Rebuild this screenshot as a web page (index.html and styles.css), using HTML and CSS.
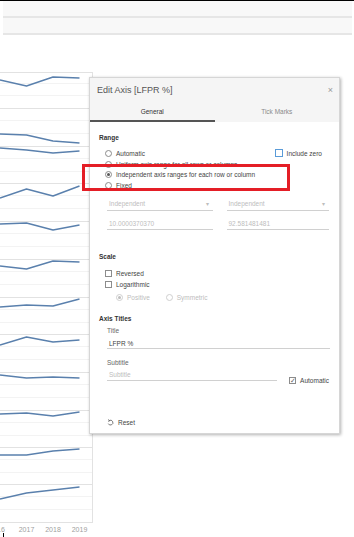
FILE: index.html
```html
<!DOCTYPE html>
<html lang="en">
<head>
    <meta charset="UTF-8">
    <meta name="viewport" content="width=device-width, initial-scale=1.0">
    <title>Edit Axis [LFPR %]</title>
    <link rel="stylesheet" href="styles.css">
</head>
<body>

    <!-- Toolbar strips across the top -->
    <div class="toolbar">
        <div class="band"></div>
        <div class="band"></div>
    </div>

    <!-- Small multiples of LFPR lines, one per row -->
    <svg class="chart" width="95" height="502" viewBox="0 35 95 502">
        <path class="grid-faint" d="M0 83.5H92M0 95.5H92M0 120.5H92M0 133.5H92M0 158.5H92M0 171.5H92M0 195.5H92M0 208.5H92M0 233.5H92M0 246.5H92M0 271.5H92M0 284.5H92M0 309.5H92M0 322.5H92M0 346.5H92M0 359.5H92M0 384.5H92M0 397.5H92M0 422.5H92M0 435.5H92M0 459.5H92M0 472.5H92M0 496.5H92M0 509.5H92"/>
        <path class="grid" d="M0 72.5H92M0 108.5H92M0 146.5H92M0 183.5H92M0 221.5H92M0 259.5H92M0 297.5H92M0 334.5H92M0 372.5H92M0 410.5H92M0 447.5H92M0 484.5H92M0 522.5H92M92.5 72V523"/>
        <g class="series">
            <polyline points="0,80 26.5,86 53,77 79.5,78"/>
            <polyline points="0,134 26.5,135 53,141 79.5,143"/>
            <polyline points="0,148 26.5,150 53,153 79.5,151"/>
            <polyline points="0,198 26.5,189 53,196 79.5,186"/>
            <polyline points="0,224 26.5,223 53,230 79.5,225"/>
            <polyline points="0,266 26.5,269 53,261 79.5,262"/>
            <polyline points="0,307 26.5,305 53,306 79.5,299"/>
            <polyline points="0,345 26.5,337 53,342 79.5,340"/>
            <polyline points="0,375 26.5,378 53,377 79.5,378"/>
            <polyline points="0,414 26.5,413 53,416 79.5,412"/>
            <polyline points="0,455 26.5,455 53,451 79.5,449"/>
            <polyline points="0,499 26.5,493 53,490 79.5,487"/>
        </g>
        <g class="axis-label">
            <text x="-3" y="531.5">2016</text>
            <text x="26.5" y="531.5">2017</text>
            <text x="53" y="531.5">2018</text>
            <text x="79.5" y="531.5">2019</text>
        </g>
        <path class="tick" d="M3.5 533V537"/>
    </svg>

    <!-- Edit Axis dialog -->
    <div class="dialog">
        <div class="dialog-head">
            <div class="dialog-title">
                <span>Edit Axis [LFPR %]</span>
                <span class="close">×</span>
            </div>
            <div class="tabs">
                <div class="tab active">General</div>
                <div class="tab">Tick Marks</div>
            </div>
        </div>

        <div class="dialog-body">
            <div class="section-title">Range</div>
            <div class="options">
                <div class="option">
                    <span class="radio"></span>Automatic
                    <span class="aside"><span class="checkbox focus"></span>Include zero</span>
                </div>
                <div class="option"><span class="radio"></span>Uniform axis range for all rows or columns</div>
                <div class="option"><span class="radio checked"></span>Independent axis ranges for each row or column</div>
                <div class="option"><span class="radio"></span>Fixed</div>
            </div>

            <div class="field-pair selects">
                <div class="field disabled">Independent<span class="caret">▾</span></div>
                <div class="field disabled narrow">Independent<span class="caret">▾</span></div>
            </div>
            <div class="field-pair values">
                <div class="field disabled">10.0000370370</div>
                <div class="field disabled narrow">92.581481481</div>
            </div>

            <div class="section-title scale">Scale</div>
            <div class="option boxed"><span class="checkbox"></span>Reversed</div>
            <div class="option boxed"><span class="checkbox"></span>Logarithmic</div>
            <div class="option sub disabled">
                <span class="radio checked"></span>Positive
                <span class="radio spaced"></span>Symmetric
            </div>

            <div class="section-title titles">Axis Titles</div>
            <div class="field-label">Title</div>
            <div class="field wide">LFPR %</div>
            <div class="field-label disabled">Subtitle</div>
            <div class="subtitle-row">
                <div class="field disabled subtitle">Subtitle</div>
                <span class="auto"><span class="checkbox ticked">✓</span>Automatic</span>
            </div>

            <div class="reset">
                <svg width="7" height="7" viewBox="0 0 7 7">
                    <path d="M2.2 1.6A2.4 2.4 0 1 1 1.3 4.6" fill="none" stroke="#555" stroke-width="0.8"/>
                    <path d="M1 0.7L2.6 1.5L1.5 2.9" fill="none" stroke="#555" stroke-width="0.8"/>
                </svg>
                Reset
            </div>
        </div>
    </div>

    <!-- Annotation box -->
    <div class="highlight"></div>

</body>
</html>
```

FILE: styles.css
```css
/* Page */
body {
    margin: 0;
    width: 354px;
    height: 537px;
    overflow: hidden;
    position: relative;
    background: #fff;
    font-family: "Liberation Sans", Arial, sans-serif;
    color: #444;
}

/* Toolbar strips */
.toolbar {
    border-top: 1px solid #000;
    padding: 0 2px 0 3px;
}

.band {
    height: 15px;
    background: #f8f8f8;
    border-bottom: 2px solid #e6e6e6;
}

/* Chart */
.chart {
    display: block;
}

.grid {
    stroke: #e2e2e2;
    stroke-width: 1;
    fill: none;
}

.grid-faint {
    stroke: #f3f3f3;
    stroke-width: 1;
    fill: none;
}

.series polyline {
    fill: none;
    stroke: #5a80ad;
    stroke-width: 1.4;
    stroke-linejoin: round;
}

.axis-label text {
    font-size: 7px;
    fill: #a0a0a0;
    text-anchor: middle;
}

.tick {
    stroke: #000;
    stroke-width: 1;
}

/* Dialog */
.dialog {
    position: absolute;
    left: 89px;
    top: 77px;
    width: 251px;
    height: 357px;
    background: #fff;
    border: 1px solid #d6d6d6;
    box-sizing: border-box;
    box-shadow: 1px 1px 3px rgba(0, 0, 0, 0.3);
}

.dialog-head {
    background: #f5f5f5;
}

.dialog-title {
    height: 24px;
    display: flex;
    align-items: center;
    justify-content: space-between;
    padding: 0 6px 0 7px;
    font-size: 9px;
    color: #555;
}

.close {
    font-size: 9px;
    color: #999;
}

.tabs {
    display: flex;
    height: 20px;
}

.tab {
    flex: 1;
    display: flex;
    align-items: center;
    justify-content: center;
    font-size: 6.5px;
    color: #8a8a8a;
    border-bottom: 1px solid #f5f5f5;
}

.tab.active {
    color: #333;
    border-bottom: 2px solid #555;
}

.dialog-body {
    padding: 11px 10px 0 9px;
    font-size: 6.5px;
}

.section-title {
    height: 10px;
    line-height: 10px;
    font-weight: bold;
    color: #333;
}

.section-title.scale {
    margin-top: 22px;
}

.section-title.titles {
    margin-top: 11px;
}

/* Radio and checkbox rows */
.options {
    margin-top: 5px;
}

.option {
    display: flex;
    align-items: center;
    height: 10.7px;
    padding-left: 6px;
    color: #444;
}

.option.boxed {
    height: 11px;
}

.section-title.scale + .option {
    margin-top: 6px;
}

.option.sub {
    height: 11px;
    margin-top: 2px;
    padding-left: 17px;
}

.radio {
    width: 7px;
    height: 7px;
    box-sizing: border-box;
    border: 1px solid #8c8c8c;
    border-radius: 50%;
    margin-right: 4px;
    display: flex;
    align-items: center;
    justify-content: center;
    background: #fff;
}

.radio.checked::after {
    content: "";
    width: 3px;
    height: 3px;
    border-radius: 50%;
    background: #555;
}

.radio.spaced {
    margin-left: 16px;
}

.checkbox {
    width: 7px;
    height: 7px;
    box-sizing: border-box;
    border: 1px solid #8c8c8c;
    margin-right: 4px;
    display: flex;
    align-items: center;
    justify-content: center;
    background: #fff;
}

.checkbox.focus {
    width: 8px;
    height: 8px;
    border-color: #5a9bd8;
}

.checkbox.ticked {
    font-size: 7px;
    color: #666;
    line-height: 7px;
}

.aside {
    display: flex;
    align-items: center;
    margin-left: auto;
    margin-right: 7px;
}

.disabled,
.disabled .caret {
    color: #bdbdbd;
}

.option.disabled .radio {
    border-color: #cfcfcf;
}

.option.disabled .radio.checked::after {
    background: #bdbdbd;
}

/* Text fields and dropdowns */
.field-pair {
    display: flex;
    gap: 14px;
    padding-left: 8px;
}

.field-pair.selects {
    margin-top: 6.5px;
}

.field-pair.selects .field {
    height: 14px;
}

.field-pair.values {
    margin-top: 7px;
}

.field-pair.values .field {
    height: 12px;
}

.field {
    width: 106px;
    display: flex;
    align-items: center;
    justify-content: space-between;
    border-bottom: 1px solid #d0d0d0;
    padding-left: 2px;
    box-sizing: border-box;
}

.field.narrow {
    width: 103px;
}

.caret {
    font-size: 6px;
    padding-right: 4px;
}

.field-label {
    height: 10px;
    line-height: 10px;
    margin-top: 2px;
    padding-left: 8px;
    color: #666;
}

.field-label.disabled {
    margin-top: 9px;
}

.field.wide {
    width: 223px;
    height: 11px;
    margin: 2px 0 0 8px;
    color: #444;
}

.subtitle-row {
    display: flex;
    align-items: flex-end;
    margin-top: 1px;
    padding-left: 8px;
}

.field.subtitle {
    width: 171px;
    height: 12px;
}

.auto {
    display: flex;
    align-items: center;
    margin-left: 12px;
    position: relative;
    top: 3px;
    color: #444;
}

.reset {
    display: flex;
    align-items: center;
    height: 10px;
    margin-top: 36px;
    padding-left: 8px;
    color: #444;
}

.reset svg {
    margin-right: 4px;
}

/* Red annotation rectangle */
.highlight {
    position: absolute;
    left: 82px;
    top: 164px;
    width: 208px;
    height: 27px;
    box-sizing: border-box;
    border: 3px solid #e41e26;
}
```
